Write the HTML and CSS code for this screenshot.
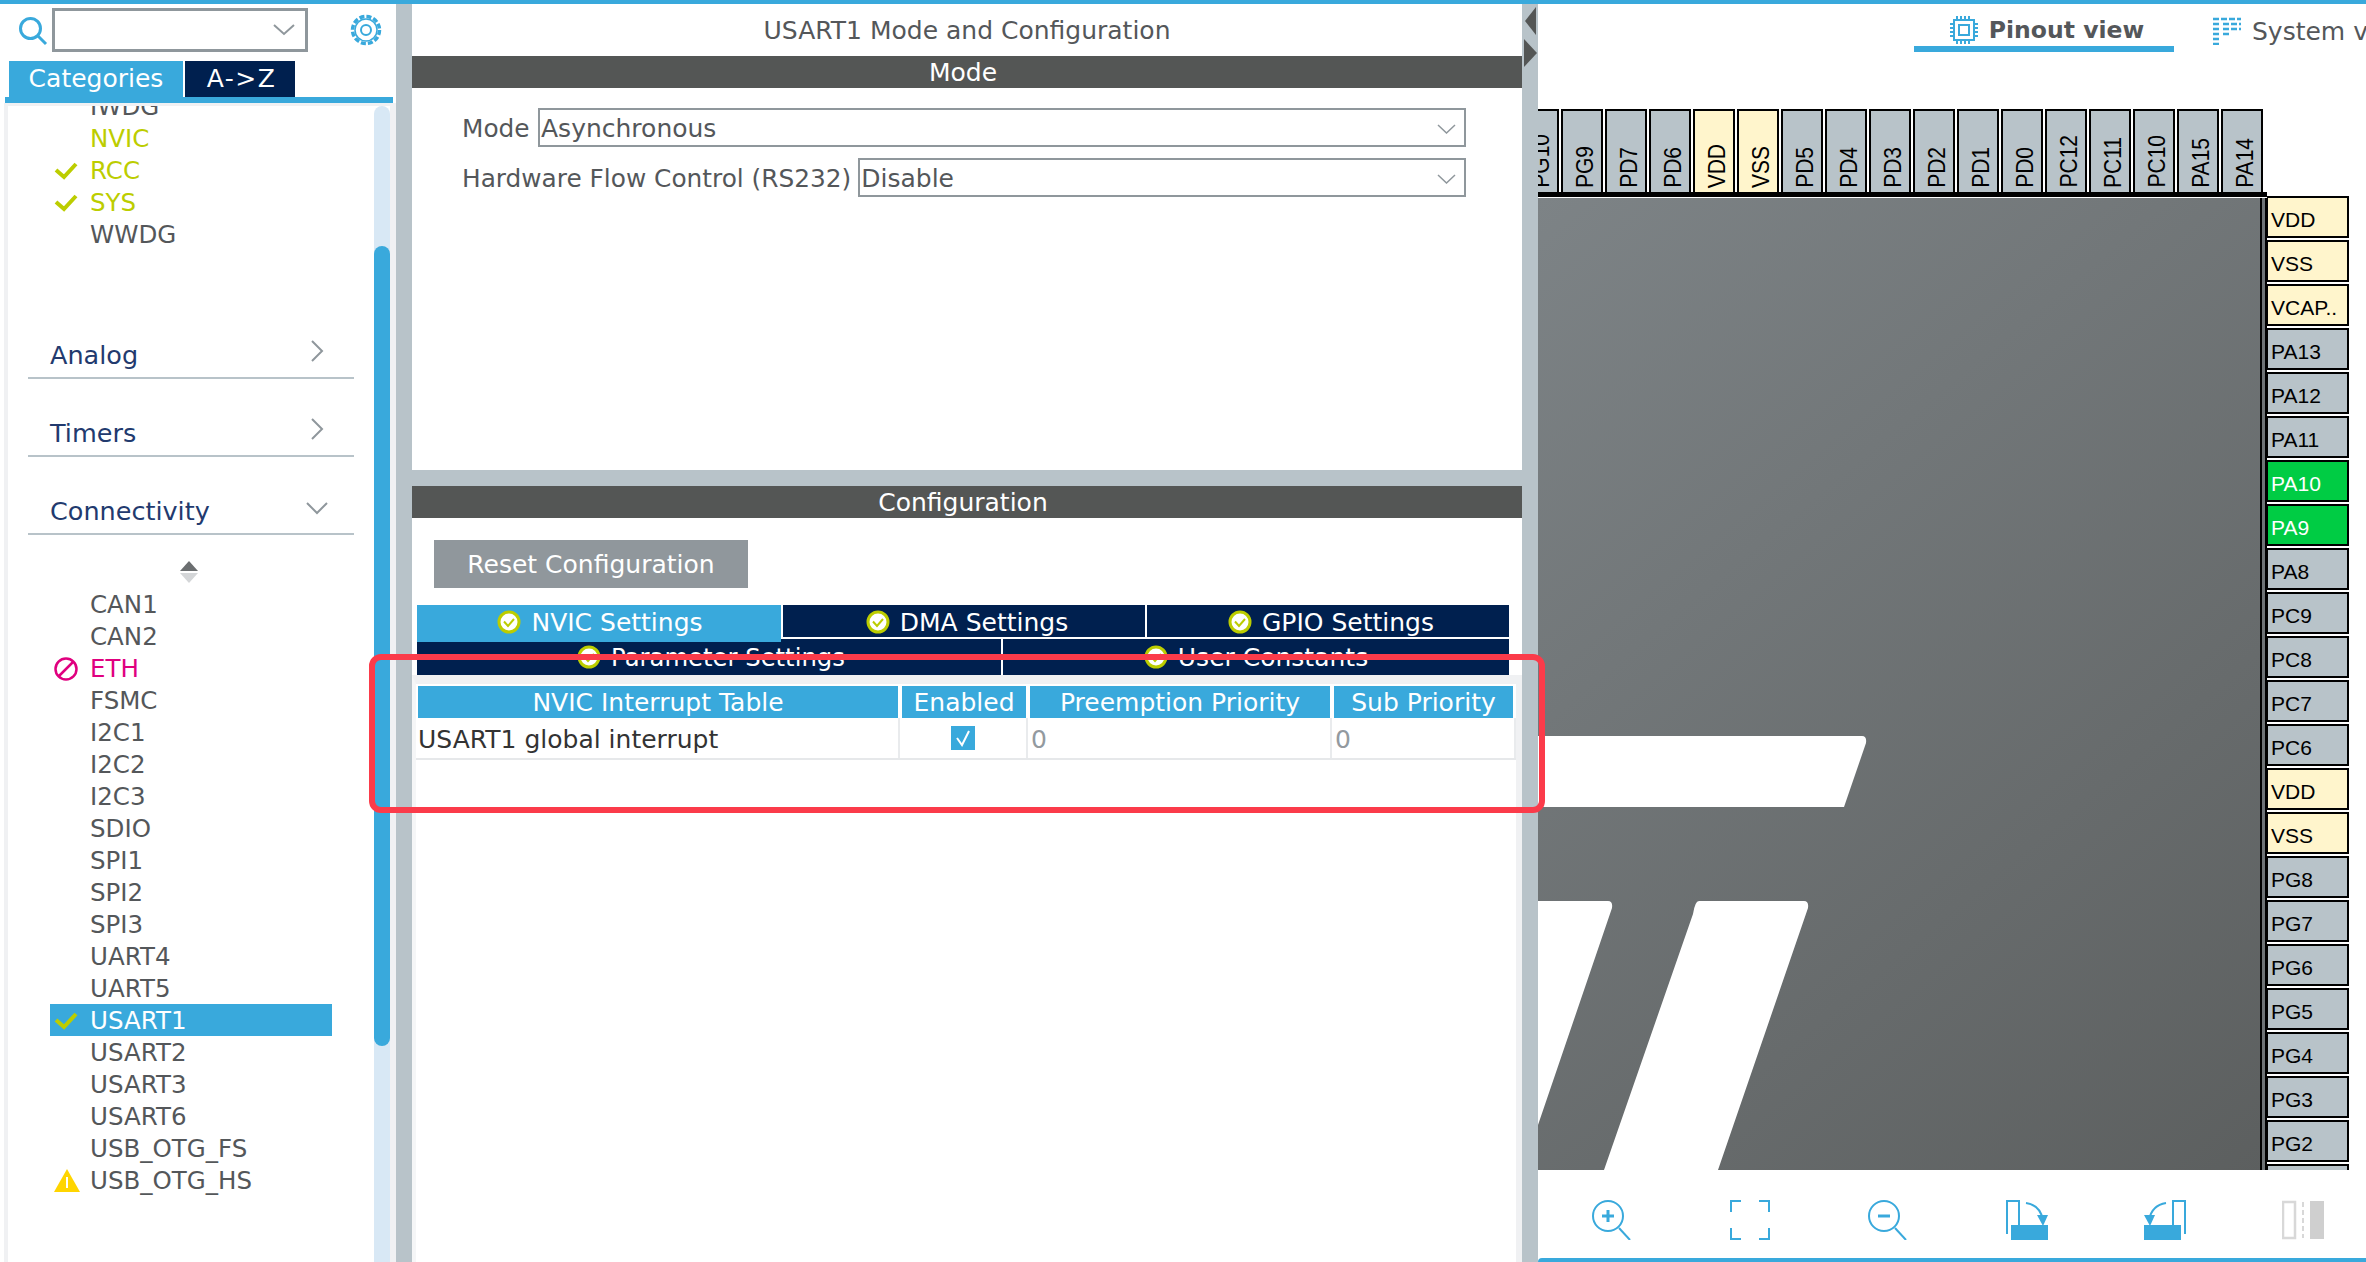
FILE: index.html
```html
<!DOCTYPE html>
<html lang="en">
<head>
    <meta charset="UTF-8">
    <meta name="viewport" content="width=device-width, initial-scale=1.0">
    <title>USART1 Mode and Configuration</title>
    <link rel="stylesheet" href="styles.css">
</head>
<body>
    <div class="topbar"></div>
    <div class="main">
        <!-- left: categories -->
        <div class="side">
            <div class="search-row">
                <svg class="search-icon" width="30" height="30" viewBox="0 0 30 30"><circle cx="12.5" cy="12.5" r="10" fill="none" stroke="#39a9dc" stroke-width="3"/><path d="M20 20l8 8" stroke="#39a9dc" stroke-width="3" fill="none"/></svg>
                <div class="search-box">
                    <svg width="22" height="12" viewBox="0 0 22 12"><path d="M1 1l10 9 10-9" fill="none" stroke="#8f979c" stroke-width="2"/></svg>
                </div>
                <svg class="gear" width="34" height="34" viewBox="0 0 34 34"><circle cx="17" cy="17" r="13.5" fill="none" stroke="#39a9dc" stroke-width="3.5" stroke-dasharray="5 2.07"/><circle cx="17" cy="17" r="11" fill="none" stroke="#39a9dc" stroke-width="1.5"/><circle cx="17" cy="17" r="5" fill="none" stroke="#39a9dc" stroke-width="2"/></svg>
            </div>
            <div class="side-tabs">
                <div class="side-tab side-tab-active">Categories</div>
                <div class="side-tab side-tab-az">A-&gt;Z</div>
            </div>
            <div class="side-line"></div>
            <div class="side-body">
                <div class="side-inner">
                    <div class="side-list">
                        <div class="list-top">
                            <div class="row first-row"><span class="slot"></span>IWDG</div>
                            <div class="row lime"><span class="slot"></span>NVIC</div>
                            <div class="row lime"><span class="slot"><svg width="24" height="20" viewBox="0 0 24 20"><path d="M2 9l8 7L22 3" fill="none" stroke="#bccd00" stroke-width="4"/></svg></span>RCC</div>
                            <div class="row lime"><span class="slot"><svg width="24" height="20" viewBox="0 0 24 20"><path d="M2 9l8 7L22 3" fill="none" stroke="#bccd00" stroke-width="4"/></svg></span>SYS</div>
                            <div class="row"><span class="slot"></span>WWDG</div>
                        </div>
                        <div class="section section-first">Analog<svg width="14" height="24" viewBox="0 0 14 24"><path d="M2 2l10 10-10 10" fill="none" stroke="#8f979c" stroke-width="2"/></svg></div>
                        <div class="section">Timers<svg width="14" height="24" viewBox="0 0 14 24"><path d="M2 2l10 10-10 10" fill="none" stroke="#8f979c" stroke-width="2"/></svg></div>
                        <div class="section">Connectivity<svg class="chev-down" width="22" height="14" viewBox="0 0 22 14"><path d="M1 2l10 10L21 2" fill="none" stroke="#8f979c" stroke-width="2"/></svg></div>
                        <div class="sort-arrows">
                            <svg width="18" height="22" viewBox="0 0 18 22"><path d="M9 0l9 10H0z" fill="#6b6e70"/><path d="M9 22l9-10H0z" fill="#d4d6d8"/></svg>
                        </div>
                        <div class="row"><span class="slot"></span>CAN1</div>
                        <div class="row"><span class="slot"></span>CAN2</div>
                        <div class="row magenta"><span class="slot"><svg width="24" height="24" viewBox="0 0 24 24"><circle cx="12" cy="12" r="10.5" fill="none" stroke="#e0007f" stroke-width="2.5"/><path d="M5 19L19 5" stroke="#e0007f" stroke-width="2.5"/></svg></span>ETH</div>
                        <div class="row"><span class="slot"></span>FSMC</div>
                        <div class="row"><span class="slot"></span>I2C1</div>
                        <div class="row"><span class="slot"></span>I2C2</div>
                        <div class="row"><span class="slot"></span>I2C3</div>
                        <div class="row"><span class="slot"></span>SDIO</div>
                        <div class="row"><span class="slot"></span>SPI1</div>
                        <div class="row"><span class="slot"></span>SPI2</div>
                        <div class="row"><span class="slot"></span>SPI3</div>
                        <div class="row"><span class="slot"></span>UART4</div>
                        <div class="row"><span class="slot"></span>UART5</div>
                        <div class="row row-selected"><span class="slot"><svg width="24" height="20" viewBox="0 0 24 20"><path d="M2 9l8 7L22 3" fill="none" stroke="#bccd00" stroke-width="4"/></svg></span>USART1</div>
                        <div class="row"><span class="slot"></span>USART2</div>
                        <div class="row"><span class="slot"></span>USART3</div>
                        <div class="row"><span class="slot"></span>USART6</div>
                        <div class="row"><span class="slot"></span>USB_OTG_FS</div>
                        <div class="row"><span class="slot"><svg width="26" height="23" viewBox="0 0 26 23"><path d="M13 0l13 23H0z" fill="#ffd500"/><path d="M13 8v11" stroke="#fff" stroke-width="2"/></svg></span>USB_OTG_HS</div>
                    </div>
                    <div class="track"><div class="thumb"></div></div>
                </div>
            </div>
        </div>

        <div class="vsplit"></div>

        <!-- middle: mode and configuration -->
        <div class="mid">
            <div class="mid-title">USART1 Mode and Configuration</div>
            <div class="bar">Mode</div>
            <div class="mode-form">
                <div class="form-row">
                    <span class="form-label">Mode</span>
                    <div class="select">Asynchronous<svg width="19" height="10" viewBox="0 0 19 10"><path d="M1 1l8.500 8 8.500-8" fill="none" stroke="#8f979c" stroke-width="1.5"/></svg></div>
                </div>
                <div class="form-row">
                    <span class="form-label">Hardware Flow Control (RS232)</span>
                    <div class="select">Disable<svg width="19" height="10" viewBox="0 0 19 10"><path d="M1 1l8.500 8 8.500-8" fill="none" stroke="#8f979c" stroke-width="1.5"/></svg></div>
                </div>
            </div>
            <div class="hsplit"></div>
            <div class="config">
                <div class="bar">Configuration</div>
                <div class="reset-btn">Reset Configuration</div>
                <div class="tab-row tab-row-one">
                    <div class="tab tab-active"><svg class="tick" width="24" height="24" viewBox="0 0 24 24"><circle cx="12" cy="12" r="10" fill="#fff" stroke="#bccd00" stroke-width="3"/><path d="M7 11.500l4 4.500 6-7" fill="none" stroke="#bccd00" stroke-width="2"/></svg>NVIC Settings</div>
                    <div class="tab"><svg class="tick" width="24" height="24" viewBox="0 0 24 24"><circle cx="12" cy="12" r="10" fill="#fff" stroke="#bccd00" stroke-width="3"/><path d="M7 11.500l4 4.500 6-7" fill="none" stroke="#bccd00" stroke-width="2"/></svg>DMA Settings</div>
                    <div class="tab"><svg class="tick" width="24" height="24" viewBox="0 0 24 24"><circle cx="12" cy="12" r="10" fill="#fff" stroke="#bccd00" stroke-width="3"/><path d="M7 11.500l4 4.500 6-7" fill="none" stroke="#bccd00" stroke-width="2"/></svg>GPIO Settings</div>
                </div>
                <div class="tab-row tab-row-two">
                    <div class="tab tab-param"><svg class="tick" width="24" height="24" viewBox="0 0 24 24"><circle cx="12" cy="12" r="10" fill="#fff" stroke="#bccd00" stroke-width="3"/><path d="M7 11.500l4 4.500 6-7" fill="none" stroke="#bccd00" stroke-width="2"/></svg>Parameter Settings</div>
                    <div class="tab tab-user"><svg class="tick" width="24" height="24" viewBox="0 0 24 24"><circle cx="12" cy="12" r="10" fill="#fff" stroke="#bccd00" stroke-width="3"/><path d="M7 11.500l4 4.500 6-7" fill="none" stroke="#bccd00" stroke-width="2"/></svg>User Constants</div>
                </div>
                <div class="table-pane">
                    <div class="table-head">
                        <div class="th">NVIC Interrupt Table</div>
                        <div class="th">Enabled</div>
                        <div class="th">Preemption Priority</div>
                        <div class="th">Sub Priority</div>
                    </div>
                    <div class="table-row">
                        <div class="td td-name">USART1 global interrupt</div>
                        <div class="td td-check"><svg width="24" height="24" viewBox="0 0 24 24"><rect width="24" height="24" fill="#39a9dc"/><path d="M6 12l5 7 7-14" fill="none" stroke="#fff" stroke-width="2"/></svg></div>
                        <div class="td td-num">0</div>
                        <div class="td td-num">0</div>
                    </div>
                </div>
            </div>
        </div>

        <div class="vsplit">
            <svg class="split-arrows" width="16" height="62" viewBox="0 0 16 62"><path d="M14 1L3 15l11 14z" fill="#545655"/><path d="M2 33l13 14L2 61z" fill="#545655"/></svg>
        </div>

        <!-- right: pinout -->
        <div class="right">
            <div class="view-tabs">
                <div class="view-tab view-tab-active">
                    <svg width="28" height="28" viewBox="0 0 28 28"><rect x="4" y="4" width="20" height="20" fill="none" stroke="#39a9dc" stroke-width="2"/><rect x="9" y="9" width="10" height="10" fill="none" stroke="#39a9dc" stroke-width="2"/><path d="M7 0v3M11 0v3M15 0v3M19 0v3M7 25v3M11 25v3M15 25v3M19 25v3M0 8h3M0 12h3M0 16h3M0 20h3M25 8h3M25 12h3M25 16h3M25 20h3" stroke="#39a9dc" stroke-width="2"/></svg>
                    Pinout view
                </div>
                <div class="view-tab view-tab-sys">
                    <svg width="28" height="28" viewBox="0 0 28 28"><path d="M0 2h28M0 7h8M0 12h8M0 17h8M0 22h8M0 27h8M10 7h18M10 12h18M10 17h8" stroke="#39a9dc" stroke-width="2.500" stroke-dasharray="6 2"/></svg>
                    System view
                </div>
            </div>
            <div class="pinout">
                <div class="pins-top">
                    <div class="pin-v"><span>PG10</span></div>
                    <div class="pin-v"><span>PG9</span></div>
                    <div class="pin-v"><span>PD7</span></div>
                    <div class="pin-v"><span>PD6</span></div>
                    <div class="pin-v pin-power"><span>VDD</span></div>
                    <div class="pin-v pin-power"><span>VSS</span></div>
                    <div class="pin-v"><span>PD5</span></div>
                    <div class="pin-v"><span>PD4</span></div>
                    <div class="pin-v"><span>PD3</span></div>
                    <div class="pin-v"><span>PD2</span></div>
                    <div class="pin-v"><span>PD1</span></div>
                    <div class="pin-v"><span>PD0</span></div>
                    <div class="pin-v"><span>PC12</span></div>
                    <div class="pin-v"><span>PC11</span></div>
                    <div class="pin-v"><span>PC10</span></div>
                    <div class="pin-v"><span>PA15</span></div>
                    <div class="pin-v"><span>PA14</span></div>
                </div>
                <div class="chip-row">
                    <div class="chip">
                        <div class="chip-face">
                            <svg class="st-logo" width="330" height="440" viewBox="0 0 330 440"><path d="M0 0H324Q329 0 328 7L306 71H0zM0 165H70Q75 165 74 172L0 389zM161 165H266Q271 165 270 172L180 434H66L155 178Q157 165 161 165z" fill="#fff"/></svg>
                        </div>
                    </div>
                    <div class="pins-right">
                        <div class="pin-h pin-power">VDD</div>
                        <div class="pin-h pin-power">VSS</div>
                        <div class="pin-h pin-power">VCAP..</div>
                        <div class="pin-h">PA13</div>
                        <div class="pin-h">PA12</div>
                        <div class="pin-h">PA11</div>
                        <div class="pin-h pin-on">PA10</div>
                        <div class="pin-h pin-on">PA9</div>
                        <div class="pin-h">PA8</div>
                        <div class="pin-h">PC9</div>
                        <div class="pin-h">PC8</div>
                        <div class="pin-h">PC7</div>
                        <div class="pin-h">PC6</div>
                        <div class="pin-h pin-power">VDD</div>
                        <div class="pin-h pin-power">VSS</div>
                        <div class="pin-h">PG8</div>
                        <div class="pin-h">PG7</div>
                        <div class="pin-h">PG6</div>
                        <div class="pin-h">PG5</div>
                        <div class="pin-h">PG4</div>
                        <div class="pin-h">PG3</div>
                        <div class="pin-h">PG2</div>
                        <div class="pin-h"></div>
                    </div>
                </div>
            </div>
            <div class="toolbar">
                <svg width="40" height="40" viewBox="0 0 40 40"><circle cx="16" cy="16" r="15" fill="none" stroke="#39a9dc" stroke-width="2"/><path d="M10 16h12M16 10v12" stroke="#39a9dc" stroke-width="3"/><path d="M27 28l11 12" stroke="#39a9dc" stroke-width="2"/></svg>
                <svg width="40" height="40" viewBox="0 0 40 40"><path d="M1 12V1h10M29 1h10v11M39 28v11H29M11 39H1V28" fill="none" stroke="#39a9dc" stroke-width="2"/></svg>
                <svg width="40" height="40" viewBox="0 0 40 40"><circle cx="16" cy="16" r="15" fill="none" stroke="#39a9dc" stroke-width="2"/><path d="M10 16h12" stroke="#39a9dc" stroke-width="3"/><path d="M27 28l11 12" stroke="#39a9dc" stroke-width="2"/></svg>
                <svg class="tool-wide" width="42" height="40" viewBox="0 0 42 40"><path d="M1 34V1h12v24" fill="none" stroke="#39a9dc" stroke-width="2"/><rect x="5" y="25" width="37" height="15" fill="#39a9dc"/><path d="M20 3Q34 5 37 20" fill="none" stroke="#39a9dc" stroke-width="2"/><path d="M31 15h11l-5 11z" fill="#39a9dc"/></svg>
                <svg class="tool-wide" width="42" height="40" viewBox="0 0 42 40"><path d="M41 34V1H29v24" fill="none" stroke="#39a9dc" stroke-width="2"/><rect x="0" y="25" width="37" height="15" fill="#39a9dc"/><path d="M22 3Q8 5 5 20" fill="none" stroke="#39a9dc" stroke-width="2"/><path d="M0 15h11l-5 11z" fill="#39a9dc"/></svg>
                <svg class="tool-wide" width="42" height="40" viewBox="0 0 42 40"><path d="M1 2h12v36H1z" fill="none" stroke="#d8d8d8" stroke-width="2.500"/><path d="M21 2v36" stroke="#d8d8d8" stroke-width="2" stroke-dasharray="5 3"/><rect x="28" y="1" width="14" height="38" fill="#cfcfcf"/></svg>
            </div>
            <div class="bottom-line"></div>
        </div>
    </div>
    <div class="red-box"></div>
</body>
</html>
```

FILE: styles.css
```css
html, body {
    margin: 0;
    height: 100%;
    overflow: hidden;
}
body {
    position: relative;
    width: 2366px;
    height: 1262px;
    font-family: "DejaVu Sans", sans-serif;
    font-size: 25px;
    color: #54575a;
    background-color: #fff;
}
.topbar {
    height: 4px;
    background-color: #39a9dc;
}
.main {
    display: flex;
    height: 1258px;
}

/* left panel */
.side {
    width: 396px;
    display: flex;
    flex-direction: column;
}
.search-row {
    height: 57px;
    position: relative;
    display: flex;
    align-items: flex-start;
    padding-left: 18px;
    box-sizing: border-box;
}
.search-icon {
    margin-top: 12px;
    margin-right: 4px;
}
.search-box {
    width: 256px;
    height: 44px;
    margin-top: 4px;
    box-sizing: border-box;
    border: 3px solid #8f979c;
    display: flex;
    align-items: center;
    justify-content: flex-end;
    padding-right: 10px;
}
.gear {
    margin-top: 9px;
    margin-left: 41px;
}
.side-tabs {
    display: flex;
    gap: 2px;
    padding-left: 9px;
    height: 36px;
}
.side-tab {
    color: #fff;
    font-size: 25px;
    line-height: 36px;
    text-align: center;
}
.side-tab-active {
    width: 174px;
    background-color: #39a9dc;
}
.side-tab-az {
    width: 110px;
    box-sizing: border-box;
    padding-left: 3px;
    letter-spacing: 1.5px;
    background-color: #00204f;
}
.side-line {
    height: 6px;
    margin: 0 3px 0 5px;
    background-color: #39a9dc;
}
.side-body {
    flex: 1;
    margin-left: 4px;
    padding: 3px 6px 0 4px;
    background-color: #f0f1f3;
    display: flex;
    min-height: 0;
}
.side-inner {
    flex: 1;
    background-color: #fff;
    display: flex;
}
.side-list {
    flex: 1;
}
.list-top {
    height: 144px;
    overflow: hidden;
}
.first-row {
    margin-top: -16px;
}
.row {
    display: flex;
    align-items: center;
    box-sizing: border-box;
    height: 32px;
    padding-top: 1px;
    width: 282px;
    margin-left: 42px;
    font-size: 24.5px;
}
.slot {
    width: 40px;
    flex-shrink: 0;
    padding-left: 4px;
    box-sizing: border-box;
    display: flex;
    align-items: center;
}
.lime {
    color: #bccd00;
}
.magenta {
    color: #e0007f;
}
.row-selected {
    background-color: #39a9dc;
    color: #fff;
}
.section {
    display: flex;
    justify-content: space-between;
    align-items: flex-start;
    box-sizing: border-box;
    width: 326px;
    height: 48px;
    margin: 30px 0 0 20px;
    padding: 9px 30px 0 22px;
    border-bottom: 2px solid #b8c3c9;
    color: #223a6e;
    font-size: 25.5px;
}
.section svg {
    margin-top: -1px;
}
.section .chev-down {
    margin-top: 5px;
    margin-right: -4px;
}
.section-first {
    margin-top: 81px;
}
.sort-arrows {
    height: 22px;
    margin: 25px 0 6px 172px;
}
.track {
    width: 16px;
    background-color: #d8e8f5;
    border-radius: 8px 8px 0 0;
}
.thumb {
    height: 800px;
    margin-top: 140px;
    background-color: #39a9dc;
    border-radius: 8px;
}
.vsplit {
    position: relative;
    width: 16px;
    flex-shrink: 0;
    background-color: #b8c3c9;
}
.split-arrows {
    position: absolute;
    left: 0;
    top: 2px;
}

/* middle panel */
.mid {
    width: 1110px;
    flex-shrink: 0;
    display: flex;
    flex-direction: column;
}
.mid-title {
    height: 52px;
    box-sizing: border-box;
    padding-top: 2px;
    line-height: 50px;
    text-align: center;
}
.bar {
    height: 32px;
    box-sizing: border-box;
    padding: 1px 8px 0 0;
    line-height: 31px;
    text-align: center;
    color: #fff;
    background-color: #545655;
}
.mode-form {
    height: 382px;
    box-sizing: border-box;
    padding: 20px 56px 0 50px;
    display: flex;
    flex-direction: column;
    gap: 11px;
}
.form-row {
    display: flex;
    align-items: center;
    gap: 7px;
    height: 39px;
}
.form-label {
    min-width: 69px;
    padding-top: 2px;
    font-size: 24.8px;
}
.select {
    flex: 1;
    height: 39px;
    box-sizing: border-box;
    border: 2px solid #8f979c;
    padding: 2px 8px 0 1px;
    display: flex;
    align-items: center;
    justify-content: space-between;
}
.hsplit {
    height: 16px;
    background-color: #b8c3c9;
}
.config {
    flex: 1;
    display: flex;
    flex-direction: column;
}
.reset-btn {
    width: 314px;
    height: 48px;
    box-sizing: border-box;
    margin: 22px 0 0 22px;
    padding-top: 1px;
    line-height: 47px;
    text-align: center;
    color: #fff;
    background-color: #90979c;
}
.tab-row {
    display: flex;
    gap: 2px;
    width: 1092px;
    margin-left: 5px;
}
.tab-row-one {
    height: 32px;
    margin-top: 17px;
    padding-bottom: 2px;
    background-color: #fff;
}
.tab-row-two {
    height: 36px;
}
.tab {
    flex: 0 0 362px;
    display: flex;
    align-items: center;
    justify-content: center;
    gap: 10px;
    box-sizing: border-box;
    color: #fff;
    background-color: #00204f;
}
.tab-row-one .tab {
    padding: 2px 0 0 6px;
}
.tab-row-one .tab-active {
    position: relative;
    z-index: 1;
    flex-basis: 364px;
    height: 37px;
    padding: 0 0 3px 2px;
    background-color: #39a9dc;
}
.tab-param {
    flex-basis: 584px;
    padding-left: 4px;
    font-size: 24.3px;
}
.tab-user {
    flex-basis: 506px;
}
.table-pane {
    flex: 1;
    border-left: 4px solid #f5f6f7;
    border-right: 6px solid #f0f1f3;
    border-top: 9px solid #f0f1f3;
}
.table-head {
    display: grid;
    grid-template-columns: 480px 124px 300px 179px;
    column-gap: 4px;
    margin: 2px 0 0 2px;
}
.th {
    height: 32px;
    box-sizing: border-box;
    padding-top: 1px;
    line-height: 31px;
    text-align: center;
    color: #fff;
    background-color: #39a9dc;
}
.table-row {
    display: grid;
    grid-template-columns: 484px 128px 304px 184px;
    height: 42px;
    box-sizing: border-box;
    border-bottom: 2px solid #e6e8ea;
}
.td {
    display: flex;
    align-items: center;
    border-right: 2px solid #e9ebed;
}
.td-name {
    padding: 2px 0 0 2px;
    color: #333;
}
.td-check {
    justify-content: center;
}
.td-num {
    padding: 2px 0 0 3px;
    color: #939a9f;
}

/* right panel */
.right {
    flex: 1;
    min-width: 0;
    display: flex;
    flex-direction: column;
}
.view-tabs {
    height: 105px;
    flex-shrink: 0;
    display: flex;
    padding-left: 376px;
    box-sizing: border-box;
    overflow: hidden;
}
.view-tab {
    display: flex;
    align-items: center;
    gap: 11px;
    height: 48px;
    box-sizing: border-box;
    padding-top: 10px;
    flex-shrink: 0;
    white-space: nowrap;
}
.view-tab svg {
    flex-shrink: 0;
}
.view-tab-active {
    width: 260px;
    justify-content: center;
    padding-left: 6px;
    font-weight: bold;
    font-size: 23.5px;
    border-bottom: 6px solid #39a9dc;
}
.view-tab-sys {
    margin-left: 39px;
    padding-top: 6px;
}
.pinout {
    flex: 1;
    min-height: 0;
    overflow: hidden;
}
.pins-top {
    display: flex;
    justify-content: flex-end;
    gap: 2px;
    height: 83px;
    padding-right: 103px;
    margin-left: -21px;
}
.pin-v {
    width: 42px;
    flex-shrink: 0;
    box-sizing: border-box;
    border: 2px solid #000;
    border-bottom: 0;
    background-color: #b8c3c9;
    display: flex;
    justify-content: center;
    align-items: flex-end;
    padding-bottom: 4px;
    padding-left: 4px;
    font-family: "Liberation Sans", sans-serif;
    font-size: 21px;
    color: #000;
}
.pin-v span {
    writing-mode: vertical-rl;
    transform: rotate(180deg) scaleX(1.15);
    line-height: 1;
}
.pin-power {
    background-color: #fff5cc;
}
.chip-row {
    display: flex;
}
.chip {
    width: 729px;
    flex-shrink: 0;
    height: 980px;
    box-sizing: border-box;
    border-top: 5px solid #000;
    background-color: #fff;
}
.chip-face {
    position: relative;
    height: 100%;
    margin-top: 1px;
    box-sizing: border-box;
    background: linear-gradient(140deg, #7d8386, #5c5f5f);
    box-shadow: inset -2px 0 0 #000, inset -5px 0 0 #6e7376, inset -7px 0 0 #000;
}
.st-logo {
    position: absolute;
    left: 0;
    top: 538px;
}
.pins-right {
    margin-top: 4px;
    width: 82px;
    font-family: "Liberation Sans", sans-serif;
    font-size: 21px;
    color: #000;
}
.pin-h {
    height: 42px;
    margin-bottom: 2px;
    box-sizing: border-box;
    border: 2px solid #000;
    border-left-width: 1px;
    background-color: #b8c3c9;
    padding: 13px 0 0 3px;
    line-height: 18px;
    overflow: hidden;
}
.pin-h.pin-power {
    background-color: #fff5cc;
}
.pin-h.pin-on {
    background-color: #00cc44;
    color: #fff;
}
.toolbar {
    height: 88px;
    flex-shrink: 0;
    box-sizing: border-box;
    padding: 30px 0 0 54px;
    display: flex;
    gap: 98px;
    background-color: #fff;
}
.toolbar svg {
    flex-shrink: 0;
}
.toolbar .tool-wide {
    margin-right: -2px;
}
.bottom-line {
    height: 4px;
    flex-shrink: 0;
    background-color: #39a9dc;
    border-radius: 8px 0 0 0;
}
.red-box {
    position: absolute;
    left: 369px;
    top: 654px;
    width: 1176px;
    height: 159px;
    box-sizing: border-box;
    border: 6px solid #fb3b4a;
    border-radius: 12px;
}
```
